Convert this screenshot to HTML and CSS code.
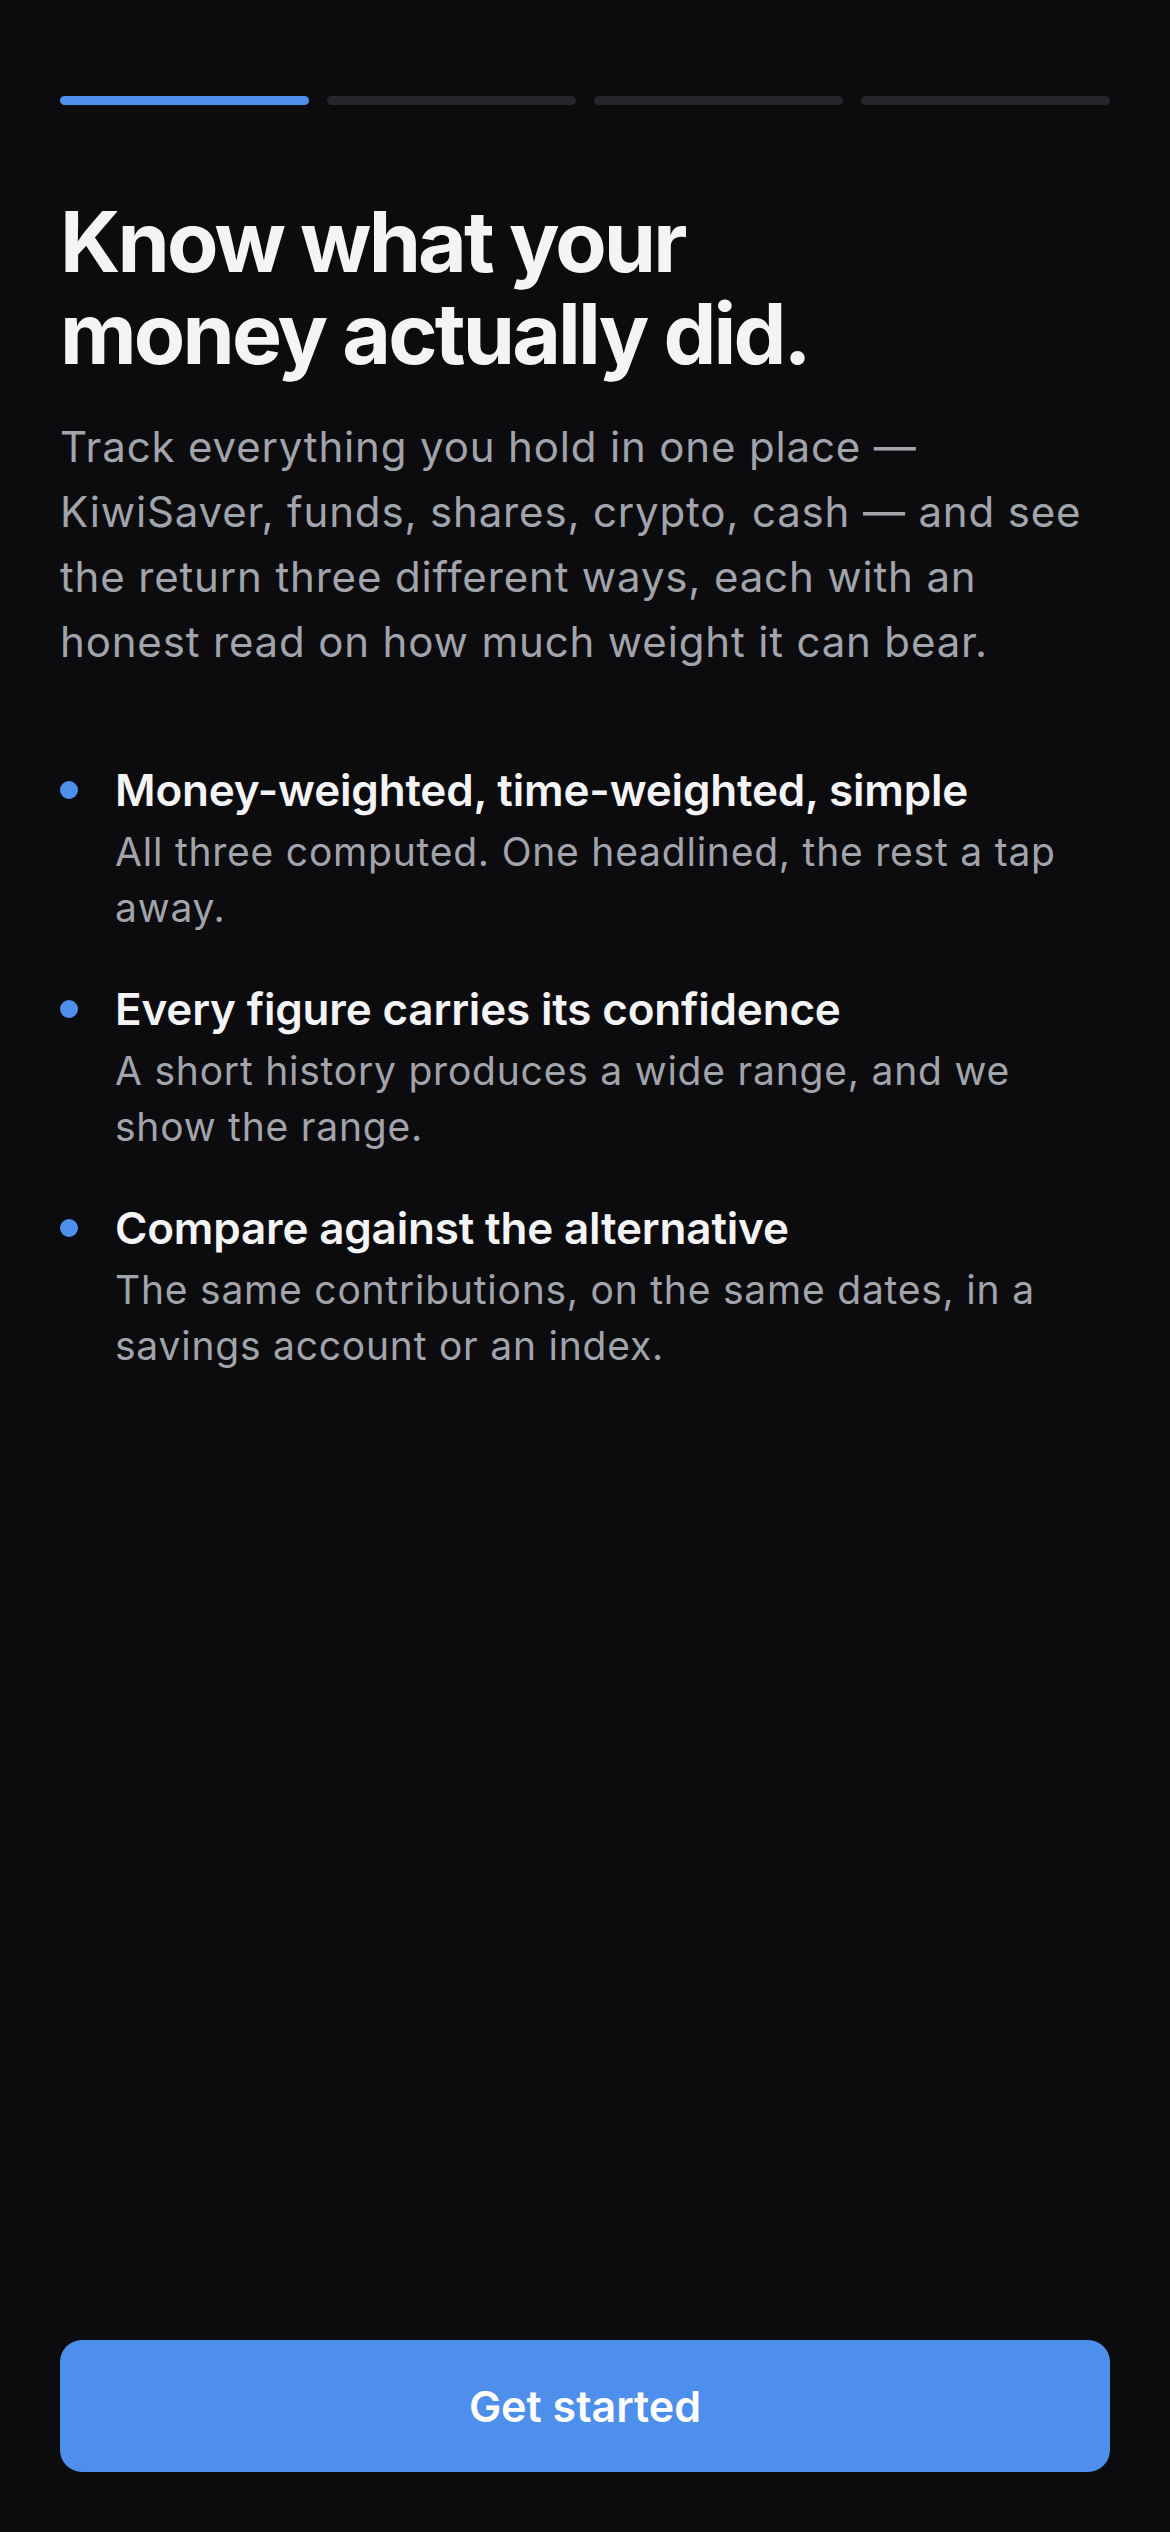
FILE: index.html
```html
<!DOCTYPE html>
<html>
<head>
    <title>Welcome</title>
    <link rel="stylesheet" href="styles.css">
</head>
<body>
    <div class="screen">
        <div class="progress">
            <span class="step active"></span>
            <span class="step"></span>
            <span class="step"></span>
            <span class="step"></span>
        </div>

        <h1>Know what your money actually did.</h1>

        <p class="intro">Track everything you hold in one place — KiwiSaver, funds, shares, crypto, cash — and see the return three different ways, each with an honest read on how much weight it can bear.</p>

        <ul class="points">
            <li>
                <span class="dot"></span>
                <div>
                    <div class="point-title">Money-weighted, time-weighted, simple</div>
                    <div class="point-text">All three computed. One headlined, the rest a tap away.</div>
                </div>
            </li>
            <li>
                <span class="dot"></span>
                <div>
                    <div class="point-title">Every figure carries its confidence</div>
                    <div class="point-text">A short history produces a wide range, and we show the range.</div>
                </div>
            </li>
            <li>
                <span class="dot"></span>
                <div>
                    <div class="point-title">Compare against the alternative</div>
                    <div class="point-text">The same contributions, on the same dates, in a savings account or an index.</div>
                </div>
            </li>
        </ul>

        <button type="button">Get started</button>
    </div>
</body>
</html>
```

FILE: styles.css
```css
html, body {
    margin: 0;
    background: #0c0c0e;
}
body {
    font-family: Inter, "Noto Sans", sans-serif;
    color: #f4f4f6;
}
.screen {
    box-sizing: border-box;
    min-height: 100vh;
    display: flex;
    flex-direction: column;
    padding: 96px 60px 60px;
}
.progress {
    display: flex;
    gap: 18px;
}
.step {
    flex: 1;
    height: 9px;
    border-radius: 5px;
    background: #25262b;
}
.step.active {
    background: #4f8fec;
}
h1 {
    margin: 91px 0 0;
    font-size: 84px;
    line-height: 92px;
    font-weight: 700;
    letter-spacing: -0.034em;
    max-width: 820px;
}
.intro {
    margin: 34px 0 0;
    font-size: 42px;
    line-height: 65px;
    letter-spacing: 0.02em;
    color: #a2a4ab;
}
.points {
    list-style: none;
    margin: 88px 0 0;
    padding: 0;
    display: flex;
    flex-direction: column;
    gap: 45px;
}
.points li {
    display: flex;
    gap: 37px;
}
.dot {
    flex: none;
    width: 18px;
    height: 18px;
    margin-top: 19px;
    border-radius: 50%;
    background: #4f8fec;
}
.point-title {
    font-size: 44px;
    line-height: 56px;
    font-weight: 600;
    letter-spacing: -0.004em;
    margin-bottom: 6px;
}
.point-text {
    font-size: 39px;
    line-height: 56px;
    letter-spacing: 0.02em;
    color: #a2a4ab;
}
button {
    margin-top: auto;
    height: 132px;
    border: none;
    border-radius: 22px;
    background: #4f8fec;
    color: #ffffff;
    font-family: Inter, "Noto Sans", sans-serif;
    font-size: 43px;
    font-weight: 600;
    cursor: pointer;
}
```
